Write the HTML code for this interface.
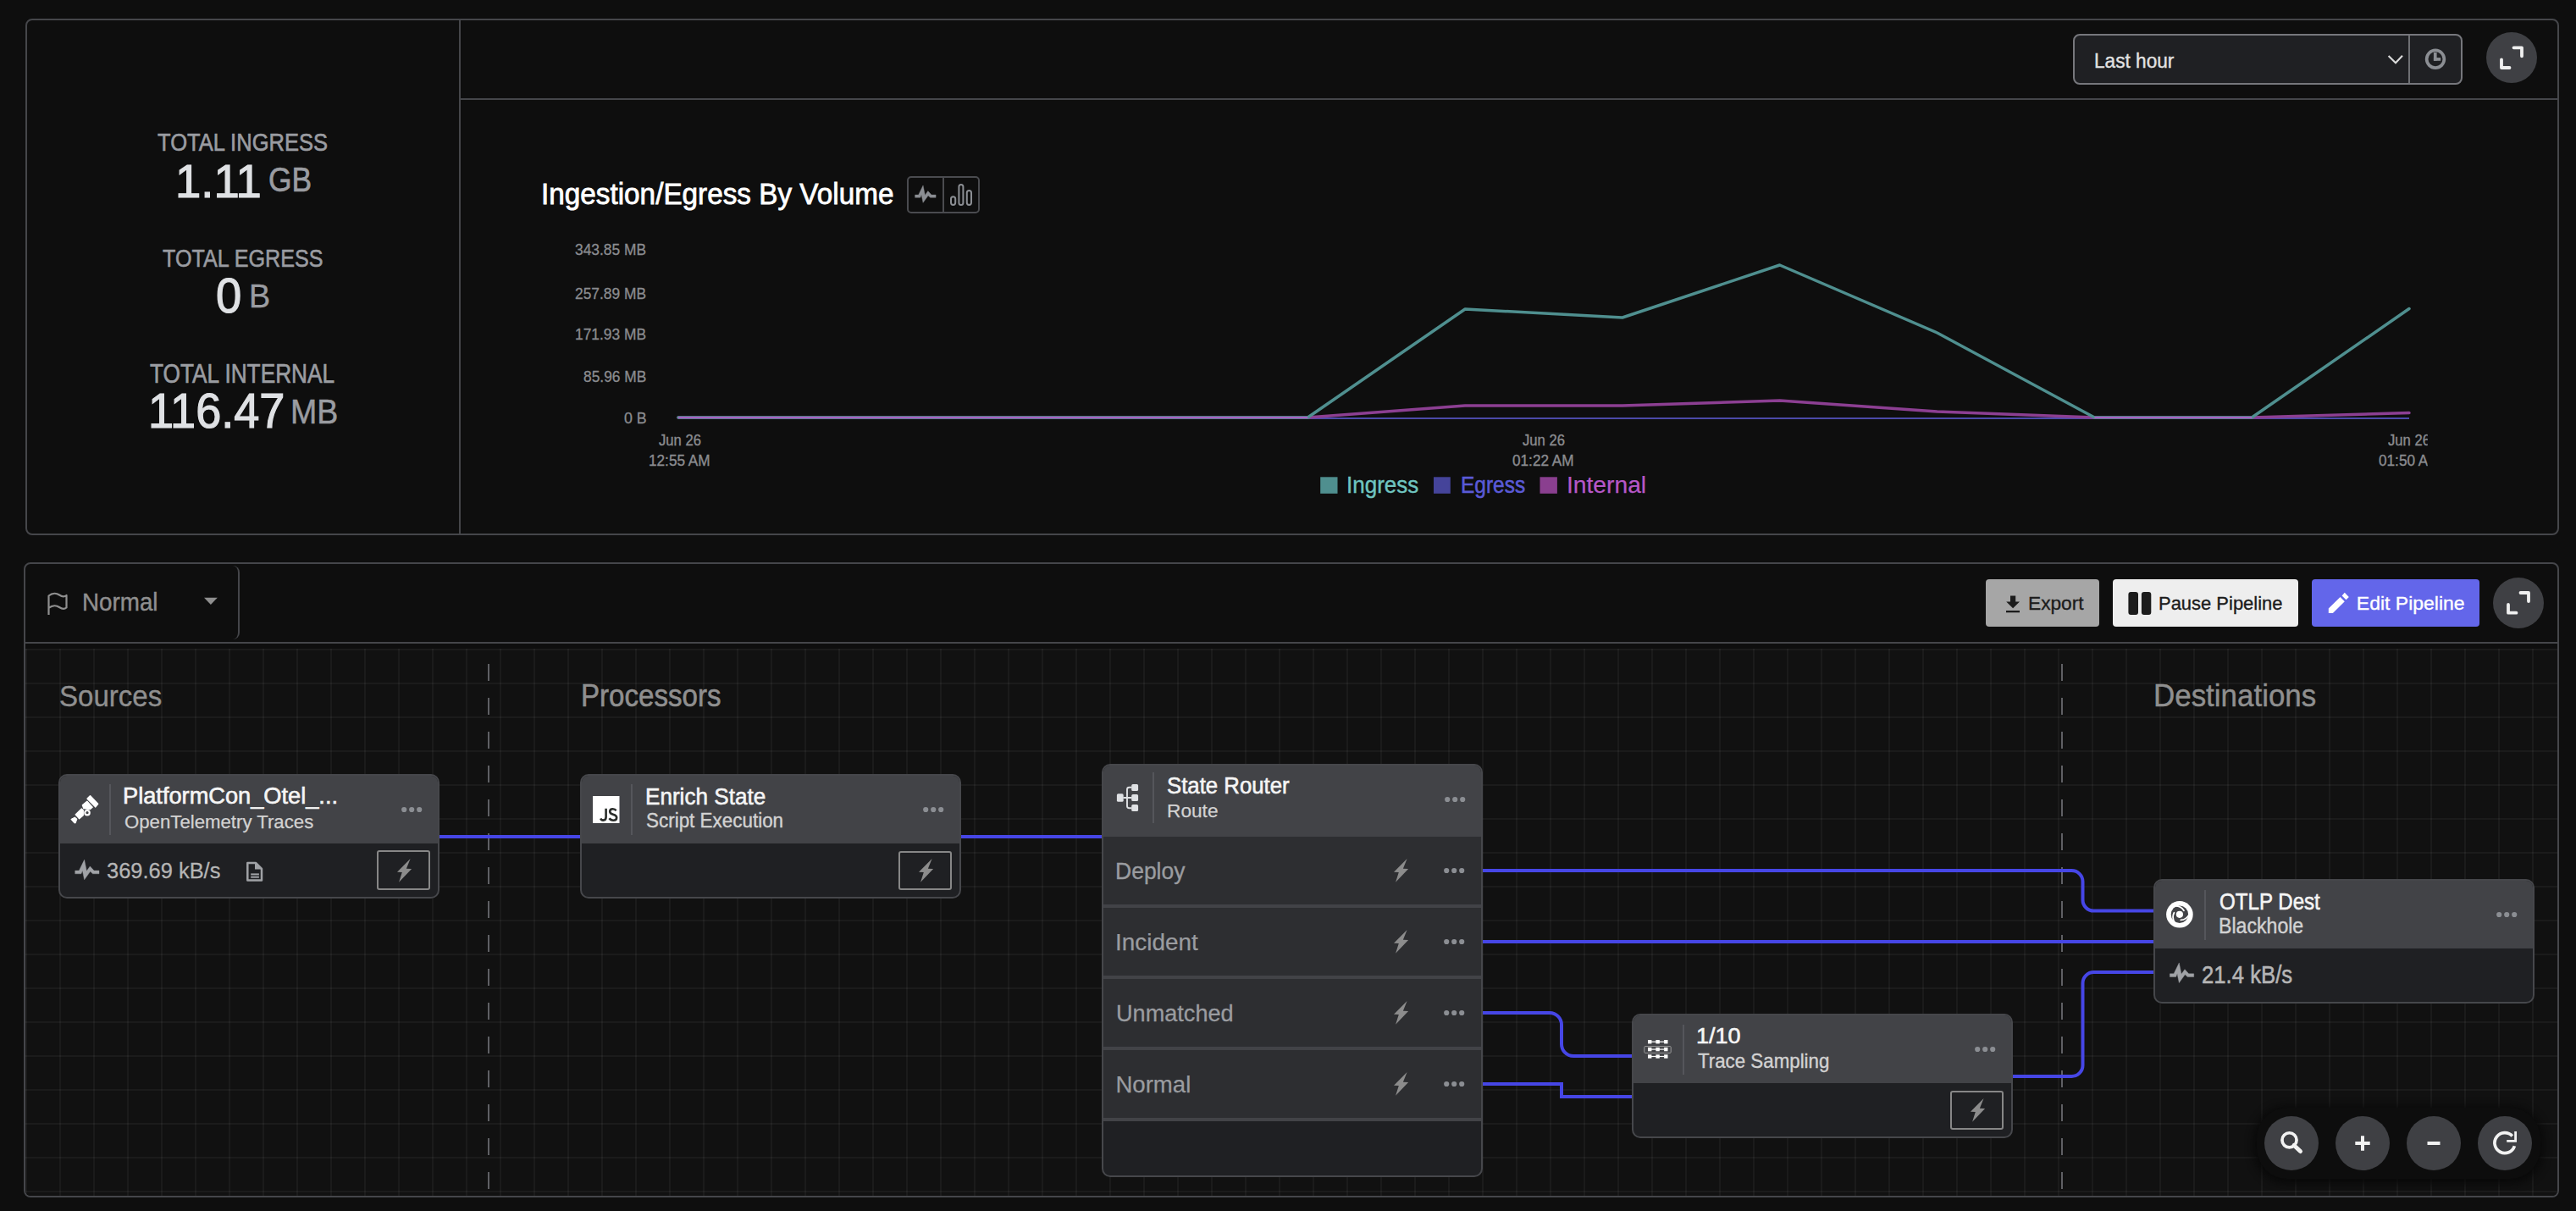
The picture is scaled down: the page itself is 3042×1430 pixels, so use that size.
<!DOCTYPE html><html><head><meta charset="utf-8"><style>
*{margin:0;padding:0;box-sizing:border-box}
html,body{width:3042px;height:1430px;overflow:hidden;background:#0e0e0e;font-family:"Liberation Sans",sans-serif}
.a{position:absolute}
.t{position:absolute;white-space:nowrap;transform-origin:0 0}
.panel{position:absolute;border:2px solid #45464a;border-radius:8px;background:#0e0e0e}
.card{position:absolute;border:2px solid #46474b;border-radius:10px;background:#1f2023;overflow:hidden}
.card .hd{position:absolute;left:0;top:0;right:0;background:#424347}
.card .dv{position:absolute;width:2px;background:#55565b}
.bolt{position:absolute;border:2px solid #8a8a8a;border-radius:2px;width:63px;height:47px}
</style></head><body>
<div class="panel" style="left:30px;top:22px;width:2992px;height:610px"></div>
<div class="a" style="left:542px;top:23px;width:2px;height:608px;background:#45464a"></div>
<div class="a" style="left:544px;top:116px;width:2477px;height:2px;background:#45464a"></div>
<div class="a" style="left:2448px;top:40px;width:460px;height:60px;border:2px solid #76777c;border-radius:8px;background:#1f2023"></div>
<div class="a" style="left:2844px;top:42px;width:2px;height:56px;background:#6e7074"></div>
<svg class="a" style="left:0;top:0" width="3042" height="140" viewBox="0 0 3042 140"><polyline points="2820.6,66 2829,74.2 2837,65.8" fill="none" stroke="#dcdcdc" stroke-width="2.1"/><circle cx="2876" cy="69.8" r="10.35" fill="none" stroke="#8b8e93" stroke-width="3.7"/><rect x="2873.9" y="62" width="3.7" height="9.8" fill="#8b8e93"/><rect x="2873.9" y="68.1" width="8.3" height="3.7" fill="#8b8e93"/><circle cx="2966" cy="68" r="30" fill="#3f4044"/><polyline points="2968.5,56.3 2978,56.3 2978,66.3" fill="none" stroke="#f0f0f0" stroke-width="3.8" stroke-linecap="round" stroke-linejoin="round"/><polyline points="2954,70.3 2954,80 2963.5,80" fill="none" stroke="#f0f0f0" stroke-width="3.8" stroke-linecap="round" stroke-linejoin="round"/></svg>
<div class="a" style="left:1071px;top:208px;width:86px;height:44px;border:2px solid #4a4b4f;border-radius:5px"></div>
<div class="a" style="left:1113px;top:209px;width:2px;height:42px;background:#4a4b4f"></div>
<svg class="a" style="left:1060px;top:200px" width="110" height="60" viewBox="1060 200 110 60"><rect x="1123" y="232.2" width="5.2" height="9.7" rx="2.6" fill="none" stroke="#8b8e93" stroke-width="2"/><rect x="1132.4" y="218.1" width="5" height="23.8" rx="2.5" fill="none" stroke="#8b8e93" stroke-width="2"/><rect x="1141.8" y="225" width="5.2" height="16.9" rx="2.6" fill="none" stroke="#8b8e93" stroke-width="2"/></svg>
<svg class="a" style="left:0;top:0" width="3042" height="600" viewBox="0 0 3042 600"><polyline points="801.0,494.0 986.8,494.0 1172.6,494.0 1358.5,494.0 1544.3,494.0 1730.1,494.0 1915.9,494.0 2101.7,494.0 2287.6,494.0 2473.4,494.0 2659.2,494.0 2845.0,494.0" fill="none" stroke="#4b4aa8" stroke-width="2"/><polyline points="801.0,493.0 986.8,493.0 1172.6,493.0 1358.5,493.0 1544.3,493.0 1730.1,479.0 1915.9,479.0 2101.7,473.0 2287.6,486.0 2473.4,493.0 2659.2,493.0 2845.0,487.5" fill="none" stroke="#8c3f92" stroke-width="3.5" stroke-linejoin="round" stroke-linecap="round"/><polyline points="801.0,493.0 986.8,493.0 1172.6,493.0 1358.5,493.0 1544.3,493.0 1730.1,365.0 1915.9,375.0 2101.7,313.0 2287.6,393.0 2473.4,493.0 2659.2,493.0 2845.0,364.5" fill="none" stroke="#4f8f8f" stroke-width="3.5" stroke-linejoin="round" stroke-linecap="round"/><line x1="801" y1="493.2" x2="1544.3" y2="493.2" stroke="#b45ac8" stroke-width="1.8"/><line x1="2473.4" y1="493.2" x2="2659.2" y2="493.2" stroke="#b45ac8" stroke-width="1.8"/><rect x="1559.2" y="563.3" width="20.3" height="19.5" fill="#4f8f8f"/><rect x="1693" y="563.3" width="19.8" height="19.5" fill="#45449a"/><rect x="1818.5" y="563.3" width="20.4" height="19.5" fill="#8a3f8f"/></svg>
<div class="panel" style="left:28px;top:664px;width:2994px;height:750px;overflow:hidden"><div class="a" style="left:0;top:92px;width:2990px;height:2px;background:#45464a"></div><div class="a" style="left:0;top:100px;width:2990px;height:646px;background-color:#111111;background-image:linear-gradient(to right,rgba(255,255,255,0.045) 0 2px,transparent 2px),linear-gradient(to bottom,rgba(255,255,255,0.045) 0 2px,transparent 2px);background-size:40px 40px;background-position:0px 0px"></div></div>
<div class="a" style="left:200px;top:668px;width:83px;height:87px;border-right:2px solid #45464a;border-radius:0 8px 8px 0"></div>
<svg class="a" style="left:0;top:650px" width="300" height="100" viewBox="0 650 300 100"><path d="M57.5,726 V703.5 C62,700 67,700.5 70,702.5 C73,704.5 76,705 78.5,703 V717.5 C76,719.5 73,719 70,717 C67,715 62,714.5 57.5,718" fill="none" stroke="#8f8f8f" stroke-width="2.2" stroke-linejoin="round"/><path d="M241,705.7 L256.8,705.7 L248.9,714 Z" fill="#8f8f8f"/></svg>
<div class="a" style="left:2345px;top:684px;width:134px;height:56px;background:#a6a6a6;border-radius:4px"></div>
<div class="a" style="left:2495px;top:684px;width:219px;height:56px;background:#eeeeee;border-radius:4px"></div>
<div class="a" style="left:2730px;top:684px;width:198px;height:56px;background:#6366ea;border-radius:4px"></div>
<svg class="a" style="left:2340px;top:680px" width="700" height="70" viewBox="2340 680 700 70"><path d="M2374,703.6 H2380.2 V710.6 H2385 L2377.1,718.2 L2369.2,710.6 H2374 Z" fill="#1c1c1c"/><rect x="2369" y="721" width="16" height="2.3" fill="#1c1c1c"/><rect x="2513.4" y="699" width="11.6" height="27" rx="3" fill="#1c1c1c"/><rect x="2528.9" y="699" width="11.4" height="27" rx="3" fill="#1c1c1c"/><path d="M2768.8,699.8 L2773.8,704.9 L2770.5,708.2 L2765.6,703.4 Z M2763.6,705 L2768.8,710.2 L2754.9,724 L2749.8,724 L2749.8,718.6 Z" fill="#ffffff"/><circle cx="2974" cy="712" r="30" fill="#3f4044"/><polyline points="2976.5,700.0 2986,700.0 2986,710.0" fill="none" stroke="#f0f0f0" stroke-width="3.8" stroke-linecap="round" stroke-linejoin="round"/><polyline points="2962,714.0 2962,723.7 2971.5,723.7" fill="none" stroke="#f0f0f0" stroke-width="3.8" stroke-linecap="round" stroke-linejoin="round"/></svg>
<svg class="a" style="left:0;top:0" width="3042" height="1430" viewBox="0 0 3042 1430"><line x1="577" y1="784" x2="577" y2="1410" stroke="#5f6064" stroke-width="2" stroke-dasharray="20 20"/><line x1="2435" y1="784" x2="2435" y2="1410" stroke="#5f6064" stroke-width="2" stroke-dasharray="20 20"/></svg>
<svg class="a" style="left:0;top:0" width="3042" height="1430" viewBox="0 0 3042 1430"><g fill="none" stroke="#4646e6" stroke-width="4"><path d="M517,988 H687"/><path d="M1133,988 H1303"/><path d="M1749,1028 H2446.5 A13,13 0 0 1 2459.5,1041 V1062.5 A13,13 0 0 0 2472.5,1075.6 H2545"/><path d="M1749,1112 H2545"/><path d="M1749,1196 H1830 A14,14 0 0 1 1844,1210 V1233 A14,14 0 0 0 1858,1247 H1929"/><path d="M1749,1280 H1844 V1295 H1929"/><path d="M2375,1271 H2446.5 A13,13 0 0 0 2459.5,1258 V1161 A13,13 0 0 1 2472.5,1148 H2545"/></g></svg>
<div class="card" style="left:69px;top:914px;width:450px;height:147px"><div class="hd" style="height:80px"></div></div>
<div class="a" style="left:129.0px;top:926px;width:2px;height:60.0px;background:#55565b"></div>
<svg class="a" style="left:471.9px;top:950px" width="32" height="12" viewBox="471.9 950 32 12" fill="#8b8e93"><circle cx="477.1" cy="956" r="3.1"/><circle cx="486.1" cy="956" r="3.1"/><circle cx="495.1" cy="956" r="3.1"/></svg>
<div class="a" style="left:445.3px;top:1004.4px;width:62.9px;height:47.0px;border:2px solid #878787;border-radius:3px"></div>
<svg class="a" style="left:468.75px;top:1013.9000000000001px" width="18.0" height="28.0" viewBox="0 0 18 28"><path d="M15.6,0 L0,15.8 L5.8,16 L2.1,27.7 L17.1,12 L10.9,11.7 Z" fill="#8c8c8c"/></svg>
<div class="card" style="left:685px;top:914px;width:450px;height:147px"><div class="hd" style="height:80px"></div></div>
<div class="a" style="left:744.7px;top:926px;width:2px;height:60.0px;background:#55565b"></div>
<svg class="a" style="left:1087.5px;top:949.8px" width="32" height="12" viewBox="1087.5 949.8 32 12" fill="#8b8e93"><circle cx="1092.7" cy="955.8" r="3.1"/><circle cx="1101.7" cy="955.8" r="3.1"/><circle cx="1110.7" cy="955.8" r="3.1"/></svg>
<div class="a" style="left:1061.2px;top:1004.5px;width:62.7px;height:46.8px;border:2px solid #878787;border-radius:3px"></div>
<svg class="a" style="left:1084.5500000000002px;top:1013.9000000000001px" width="18.0" height="28.0" viewBox="0 0 18 28"><path d="M15.6,0 L0,15.8 L5.8,16 L2.1,27.7 L17.1,12 L10.9,11.7 Z" fill="#8c8c8c"/></svg>
<div class="card" style="left:1301px;top:902px;width:450px;height:488px"><div class="hd" style="height:84px"></div></div>
<div class="a" style="left:1303px;top:988px;width:446px;height:332px;background:#2d2e31"></div>
<div class="a" style="left:1303px;top:1068px;width:446px;height:4px;background:#424347"></div>
<div class="a" style="left:1303px;top:1152px;width:446px;height:4px;background:#424347"></div>
<div class="a" style="left:1303px;top:1236px;width:446px;height:4px;background:#424347"></div>
<div class="a" style="left:1303px;top:1320px;width:446px;height:4px;background:#424347"></div>
<div class="a" style="left:1361.0px;top:912px;width:2px;height:59.5px;background:#55565b"></div>
<svg class="a" style="left:1703.5px;top:938px" width="32" height="12" viewBox="1703.5 938 32 12" fill="#8b8e93"><circle cx="1708.7" cy="944" r="3.1"/><circle cx="1717.7" cy="944" r="3.1"/><circle cx="1726.7" cy="944" r="3.1"/></svg>
<svg class="a" style="left:1646px;top:1014px" width="18.0" height="28.0" viewBox="0 0 18 28"><path d="M15.6,0 L0,15.8 L5.8,16 L2.1,27.7 L17.1,12 L10.9,11.7 Z" fill="#8c8c8c"/></svg>
<svg class="a" style="left:1703.2px;top:1022px" width="32" height="12" viewBox="1703.2 1022 32 12" fill="#8b8e93"><circle cx="1708.4" cy="1028" r="3.1"/><circle cx="1717.4" cy="1028" r="3.1"/><circle cx="1726.4" cy="1028" r="3.1"/></svg>
<svg class="a" style="left:1646px;top:1098px" width="18.0" height="28.0" viewBox="0 0 18 28"><path d="M15.6,0 L0,15.8 L5.8,16 L2.1,27.7 L17.1,12 L10.9,11.7 Z" fill="#8c8c8c"/></svg>
<svg class="a" style="left:1703.2px;top:1106px" width="32" height="12" viewBox="1703.2 1106 32 12" fill="#8b8e93"><circle cx="1708.4" cy="1112" r="3.1"/><circle cx="1717.4" cy="1112" r="3.1"/><circle cx="1726.4" cy="1112" r="3.1"/></svg>
<svg class="a" style="left:1646px;top:1182px" width="18.0" height="28.0" viewBox="0 0 18 28"><path d="M15.6,0 L0,15.8 L5.8,16 L2.1,27.7 L17.1,12 L10.9,11.7 Z" fill="#8c8c8c"/></svg>
<svg class="a" style="left:1703.2px;top:1190px" width="32" height="12" viewBox="1703.2 1190 32 12" fill="#8b8e93"><circle cx="1708.4" cy="1196" r="3.1"/><circle cx="1717.4" cy="1196" r="3.1"/><circle cx="1726.4" cy="1196" r="3.1"/></svg>
<svg class="a" style="left:1646px;top:1266px" width="18.0" height="28.0" viewBox="0 0 18 28"><path d="M15.6,0 L0,15.8 L5.8,16 L2.1,27.7 L17.1,12 L10.9,11.7 Z" fill="#8c8c8c"/></svg>
<svg class="a" style="left:1703.2px;top:1274px" width="32" height="12" viewBox="1703.2 1274 32 12" fill="#8b8e93"><circle cx="1708.4" cy="1280" r="3.1"/><circle cx="1717.4" cy="1280" r="3.1"/><circle cx="1726.4" cy="1280" r="3.1"/></svg>
<div class="card" style="left:1927px;top:1197px;width:450px;height:147px"><div class="hd" style="height:80px"></div></div>
<div class="a" style="left:1986.6px;top:1209.6px;width:2px;height:59.4px;background:#55565b"></div>
<svg class="a" style="left:2329.6px;top:1232.7px" width="32" height="12" viewBox="2329.6 1232.7 32 12" fill="#8b8e93"><circle cx="2334.8" cy="1238.7" r="3.1"/><circle cx="2343.8" cy="1238.7" r="3.1"/><circle cx="2352.8" cy="1238.7" r="3.1"/></svg>
<div class="a" style="left:2303.3px;top:1287.7px;width:63.0px;height:46.7px;border:2px solid #878787;border-radius:3px"></div>
<svg class="a" style="left:2326.8px;top:1297.0500000000002px" width="18.0" height="28.0" viewBox="0 0 18 28"><path d="M15.6,0 L0,15.8 L5.8,16 L2.1,27.7 L17.1,12 L10.9,11.7 Z" fill="#8c8c8c"/></svg>
<div class="card" style="left:2543px;top:1038px;width:450px;height:147px"><div class="hd" style="height:80px"></div></div>
<div class="a" style="left:2602.5px;top:1050.7px;width:2px;height:58.9px;background:#55565b"></div>
<svg class="a" style="left:2945.6px;top:1073.8px" width="32" height="12" viewBox="2945.6 1073.8 32 12" fill="#8b8e93"><circle cx="2950.8" cy="1079.8" r="3.1"/><circle cx="2959.8" cy="1079.8" r="3.1"/><circle cx="2968.8" cy="1079.8" r="3.1"/></svg>
<div class="a" style="left:2665px;top:1308px;width:335px;height:84px;border-radius:36px;background:#0d0d0d;box-shadow:0 2px 10px 4px rgba(8,8,8,0.85)"></div>
<svg class="a" style="left:2660px;top:1300px" width="360" height="100" viewBox="2660 1300 360 100"><circle cx="2706" cy="1350" r="32" fill="#3f4044"/><circle cx="2790" cy="1350" r="32" fill="#3f4044"/><circle cx="2874" cy="1350" r="32" fill="#3f4044"/><circle cx="2958" cy="1350" r="32" fill="#3f4044"/></svg>
<svg class="a" style="left:0;top:0" width="3042" height="1430" viewBox="0 0 3042 1430"><polygon points="88.70,1028.10 93.40,1028.10 99.60,1015.20 102.30,1028.60 106.30,1022.90 111.00,1028.10 117.00,1028.10 117.00,1031.80 109.50,1031.80 106.60,1029.10 99.60,1038.80 97.40,1028.10 95.90,1031.80 88.70,1031.80" fill="#a0a2a6" stroke="#a0a2a6" stroke-width="0.4" stroke-linejoin="round"/></svg>
<svg class="a" style="left:0;top:0" width="3042" height="1430" viewBox="0 0 3042 1430"><polygon points="2562.40,1149.85 2567.10,1149.85 2573.30,1136.95 2576.00,1150.35 2580.00,1144.65 2584.70,1149.85 2590.70,1149.85 2590.70,1153.55 2583.20,1153.55 2580.30,1150.85 2573.30,1160.55 2571.10,1149.85 2569.60,1153.55 2562.40,1153.55" fill="#a0a2a6" stroke="#a0a2a6" stroke-width="0.4" stroke-linejoin="round"/></svg>
<svg class="a" style="left:0;top:0" width="3042" height="1430" viewBox="0 0 3042 1430"><polygon points="1080.60,230.10 1084.67,230.10 1090.04,218.93 1092.37,230.53 1095.84,225.60 1099.91,230.10 1105.10,230.10 1105.10,233.30 1098.61,233.30 1096.10,230.97 1090.04,239.36 1088.13,230.10 1086.83,233.30 1080.60,233.30" fill="#8b8e93" stroke="#8b8e93" stroke-width="0.4" stroke-linejoin="round"/></svg>
<svg class="a" style="left:0;top:0" width="3042" height="1430" viewBox="0 0 3042 1430"><g fill="#ffffff"><path d="M106.5,939.9 L115.6,949.3 L112.7,952.8 L103.2,943.1 Z" stroke="#ffffff" stroke-width="1.6" stroke-linejoin="round"/><path d="M97.3,950.8 L102.8,946.1 L109.2,953.2 L106.2,955.7 L98.8,954.7 Z" stroke="#ffffff" stroke-width="1.2" stroke-linejoin="round"/><path d="M89.1,961.9 L96.3,955 L98.3,956.7 L98.3,962.7 L93.6,966.9 Z" stroke="#ffffff" stroke-width="1.2" stroke-linejoin="round"/><path d="M83.9,967.4 L88.4,965.1 L90.9,967.1 L89.1,972.1 L87.4,971.6 Z" stroke="#ffffff" stroke-width="1" stroke-linejoin="round"/><circle cx="103" cy="959.7" r="3.8"/></g><circle cx="103" cy="959.7" r="1.6" fill="#424347"/><rect x="700" y="940" width="31.5" height="32" fill="#ffffff"/><path d="M715.6,954.8 V965 Q715.6,968.6 712.2,968.6 Q710.1,968.6 709.2,966.4" fill="none" stroke="#2a2d2a" stroke-width="2.6"/><path d="M727.6,957.3 Q726.3,955.2 723.6,955.2 Q720.2,955.2 720.2,958.2 Q720.2,960.7 724,961.7 Q728.2,962.8 728.2,965.5 Q728.2,968.7 724.2,968.7 Q721,968.7 719.5,966.3" fill="none" stroke="#2a2d2a" stroke-width="2.6"/><g fill="#dfe1e4"><rect x="1318.9" y="937.3" width="7.8" height="9.5" rx="1.6"/><rect x="1336.2" y="926.1" width="7.9" height="7.9" rx="1.6"/><rect x="1336.2" y="938.1" width="7.9" height="7.9" rx="1.6"/><rect x="1336.2" y="950.1" width="7.9" height="7.9" rx="1.6"/></g><path d="M1336.5,929.8 H1333.5 Q1331,929.8 1331,932.3 V951.7 Q1331,954.2 1333.5,954.2 H1336.5 M1326.5,942 H1336.5" fill="none" stroke="#dfe1e4" stroke-width="1.9"/><g fill="#ffffff"><rect x="1946" y="1228" width="4.4" height="4.4"/><rect x="1955.4" y="1228" width="4.4" height="4.4"/><rect x="1965.1" y="1228" width="4.4" height="4.4"/><rect x="1950" y="1229.6" width="15.4" height="1.2"/><rect x="1946" y="1236.9" width="4.4" height="4.4"/><rect x="1955.4" y="1236.9" width="4.4" height="4.4"/><rect x="1965.1" y="1236.9" width="4.4" height="4.4"/><rect x="1950" y="1238.5" width="15.4" height="1.2"/><rect x="1946" y="1245.3" width="4.4" height="4.4"/><rect x="1955.4" y="1245.3" width="4.4" height="4.4"/><rect x="1965.1" y="1245.3" width="4.4" height="4.4"/><rect x="1950" y="1246.8999999999999" width="15.4" height="1.2"/></g><rect x="1941.8" y="1235.6" width="31.4" height="7.8" rx="1" fill="none" stroke="#9a9a9a" stroke-width="1"/><circle cx="2573.9" cy="1079.8" r="15.8" fill="#ffffff"/><circle cx="2573.9" cy="1079.8" r="10.2" fill="#424347"/><circle cx="2573.9" cy="1079.8" r="4.1" fill="#ffffff"/><g fill="none" stroke="#ffffff" stroke-width="1.8" stroke-linecap="round"><path d="M2568.64,1069.91 Q2575.67,1069.75 2578.95,1075.25"/><path d="M2585.09,1080.19 Q2581.71,1086.36 2575.31,1086.45"/><path d="M2567.96,1089.30 Q2564.32,1083.29 2567.43,1077.70"/></g><path d="M302,1019 H292.3 V1039.5 H309 V1026 Z" fill="none" stroke="#a0a2a6" stroke-width="2.5" stroke-linejoin="round"/><path d="M301,1018.5 L310,1026.5 L301,1026.5 Z" fill="#a0a2a6"/><rect x="296.2" y="1031.4" width="9.7" height="2" fill="#a0a2a6"/><rect x="296.2" y="1034.7" width="9.7" height="2" fill="#a0a2a6"/><g fill="none" stroke="#f2f2f2"><circle cx="2703.5" cy="1346.3" r="8.55" stroke-width="3.7"/><line x1="2709" y1="1352.5" x2="2716.5" y2="1359.5" stroke-width="5" stroke-linecap="round"/><path d="M2781.3,1350 H2798.7 M2790,1341.3 V1358.7" stroke-width="4"/><path d="M2866.5,1350 H2881.5" stroke-width="4"/><path d="M2969.4,1353.2 A12,12 0 1 1 2966.8,1341.5" stroke-width="3.7"/><path d="M2970.6,1336 V1347.3 H2960.2" stroke-width="2.8"/></g></svg>
<div class="t" style="left:185.99px;top:153.40px;font-size:30.23px;line-height:30.23px;color:#9a9ca1;transform:scaleX(0.8451);-webkit-text-stroke:0.67px #9a9ca1;">TOTAL INGRESS</div>
<div class="t" style="left:206.62px;top:185.54px;font-size:55.81px;line-height:55.81px;color:#dfe1e4;transform:scaleX(0.9752);-webkit-text-stroke:1.20px #dfe1e4;">1.11</div>
<div class="t" style="left:316.73px;top:193.03px;font-size:40.12px;line-height:40.12px;color:#9a9ca1;transform:scaleX(0.8817);-webkit-text-stroke:0.68px #9a9ca1;">GB</div>
<div class="t" style="left:191.80px;top:291.39px;font-size:29.07px;line-height:29.07px;color:#9a9ca1;transform:scaleX(0.8652);-webkit-text-stroke:0.60px #9a9ca1;">TOTAL EGRESS</div>
<div class="t" style="left:255.49px;top:321.42px;font-size:57.85px;line-height:57.85px;color:#dfe1e4;transform:scaleX(0.9409);-webkit-text-stroke:1.20px #dfe1e4;">0</div>
<div class="t" style="left:293.58px;top:330.62px;font-size:38.95px;line-height:38.95px;color:#9a9ca1;transform:scaleX(0.9693);-webkit-text-stroke:0.36px #9a9ca1;">B</div>
<div class="t" style="left:177.38px;top:425.83px;font-size:30.67px;line-height:30.67px;color:#9a9ca1;transform:scaleX(0.8554);-webkit-text-stroke:0.65px #9a9ca1;">TOTAL INTERNAL</div>
<div class="t" style="left:174.84px;top:457.88px;font-size:56.83px;line-height:56.83px;color:#dfe1e4;transform:scaleX(0.9519);-webkit-text-stroke:1.20px #dfe1e4;">116.47</div>
<div class="t" style="left:342.99px;top:465.54px;font-size:40.70px;line-height:40.70px;color:#9a9ca1;transform:scaleX(0.9232);-webkit-text-stroke:0.53px #9a9ca1;">MB</div>
<div class="t" style="left:2473.19px;top:59.69px;font-size:23.98px;line-height:23.98px;color:#e2e2e2;transform:scaleX(0.9441);-webkit-text-stroke:0.37px #e2e2e2;">Last hour</div>
<div class="t" style="left:638.70px;top:212.17px;font-size:35.47px;line-height:35.47px;color:#ffffff;transform:scaleX(0.9387);-webkit-text-stroke:0.80px #ffffff;">Ingestion/Egress By Volume</div>
<div class="t" style="left:679.39px;top:285.84px;font-size:18.02px;line-height:18.02px;color:#8a8b8f;transform:scaleX(0.9649);-webkit-text-stroke:0.31px #8a8b8f;">343.85 MB</div>
<div class="t" style="left:679.39px;top:337.84px;font-size:18.02px;line-height:18.02px;color:#8a8b8f;transform:scaleX(0.9649);-webkit-text-stroke:0.31px #8a8b8f;">257.89 MB</div>
<div class="t" style="left:679.39px;top:385.74px;font-size:18.02px;line-height:18.02px;color:#8a8b8f;transform:scaleX(0.9649);-webkit-text-stroke:0.31px #8a8b8f;">171.93 MB</div>
<div class="t" style="left:689.06px;top:435.54px;font-size:18.02px;line-height:18.02px;color:#8a8b8f;transform:scaleX(0.9649);-webkit-text-stroke:0.31px #8a8b8f;">85.96 MB</div>
<div class="t" style="left:736.79px;top:485.47px;font-size:18.46px;line-height:18.46px;color:#8a8b8f;transform:scaleX(0.9649);-webkit-text-stroke:0.31px #8a8b8f;">0 B</div>
<div class="t" style="left:778.13px;top:511.42px;font-size:18.17px;line-height:18.17px;color:#8a8b8f;transform:scaleX(0.9162);-webkit-text-stroke:0.39px #8a8b8f;">Jun 26</div>
<div class="t" style="left:766.16px;top:534.82px;font-size:18.75px;line-height:18.75px;color:#8a8b8f;transform:scaleX(0.9162);-webkit-text-stroke:0.39px #8a8b8f;">12:55 AM</div>
<div class="t" style="left:1798.13px;top:511.42px;font-size:18.17px;line-height:18.17px;color:#8a8b8f;transform:scaleX(0.9162);-webkit-text-stroke:0.39px #8a8b8f;">Jun 26</div>
<div class="t" style="left:1786.31px;top:534.82px;font-size:18.75px;line-height:18.75px;color:#8a8b8f;transform:scaleX(0.9162);-webkit-text-stroke:0.39px #8a8b8f;">01:22 AM</div>
<div class="t" style="left:2820.23px;top:511.42px;font-size:18.17px;line-height:18.17px;color:#8a8b8f;transform:scaleX(0.9162);-webkit-text-stroke:0.39px #8a8b8f;width:50.5px;overflow:hidden;">Jun 26</div>
<div class="t" style="left:2808.61px;top:534.82px;font-size:18.75px;line-height:18.75px;color:#8a8b8f;transform:scaleX(0.9162);-webkit-text-stroke:0.39px #8a8b8f;width:63.2px;overflow:hidden;">01:50 AM</div>
<div class="t" style="left:1590.16px;top:559.17px;font-size:27.91px;line-height:27.91px;color:#6fc5c0;transform:scaleX(0.9315);-webkit-text-stroke:0.42px #6fc5c0;">Ingress</div>
<div class="t" style="left:1724.74px;top:559.17px;font-size:27.91px;line-height:27.91px;color:#5a5ad6;transform:scaleX(0.8763);-webkit-text-stroke:0.56px #5a5ad6;">Egress</div>
<div class="t" style="left:1849.66px;top:559.17px;font-size:27.91px;line-height:27.91px;color:#b657c8;transform:scaleX(1.0108);-webkit-text-stroke:0.25px #b657c8;">Internal</div>
<div class="t" style="left:96.78px;top:696.29px;font-size:29.65px;line-height:29.65px;color:#8f8f8f;transform:scaleX(0.9371);-webkit-text-stroke:0.42px #8f8f8f;">Normal</div>
<div class="t" style="left:2395.18px;top:700.86px;font-size:22.97px;line-height:22.97px;color:#1c1c1c;transform:scaleX(0.9880);-webkit-text-stroke:0.35px #1c1c1c;">Export</div>
<div class="t" style="left:2549.24px;top:700.86px;font-size:22.97px;line-height:22.97px;color:#1c1c1c;transform:scaleX(0.9559);-webkit-text-stroke:0.35px #1c1c1c;">Pause Pipeline</div>
<div class="t" style="left:2782.86px;top:700.86px;font-size:22.97px;line-height:22.97px;color:#ffffff;-webkit-text-stroke:0.35px #ffffff;">Edit Pipeline</div>
<div class="t" style="left:70.21px;top:804.71px;font-size:34.59px;line-height:34.59px;color:#8f8f8f;transform:scaleX(0.9562);-webkit-text-stroke:0.39px #8f8f8f;">Sources</div>
<div class="t" style="left:685.75px;top:803.42px;font-size:37.06px;line-height:37.06px;color:#8f8f8f;transform:scaleX(0.8934);-webkit-text-stroke:0.61px #8f8f8f;">Processors</div>
<div class="t" style="left:2543.20px;top:803.12px;font-size:37.06px;line-height:37.06px;color:#8f8f8f;transform:scaleX(0.9429);-webkit-text-stroke:0.44px #8f8f8f;">Destinations</div>
<div class="t" style="left:145.42px;top:926.93px;font-size:26.89px;line-height:26.89px;color:#f5f5f5;transform:scaleX(1.0123);-webkit-text-stroke:0.60px #f5f5f5;">PlatformCon_Otel_...</div>
<div class="t" style="left:146.60px;top:960.03px;font-size:21.22px;line-height:21.22px;color:#d2d2d2;transform:scaleX(1.0459);-webkit-text-stroke:0.25px #d2d2d2;">OpenTelemetry Traces</div>
<div class="t" style="left:126.31px;top:1016.09px;font-size:25.87px;line-height:25.87px;color:#b5b5b5;transform:scaleX(0.9842);-webkit-text-stroke:0.29px #b5b5b5;">369.69 kB/s</div>
<div class="t" style="left:761.51px;top:926.89px;font-size:27.76px;line-height:27.76px;color:#f5f5f5;transform:scaleX(0.9407);-webkit-text-stroke:0.60px #f5f5f5;">Enrich State</div>
<div class="t" style="left:762.59px;top:957.32px;font-size:24.42px;line-height:24.42px;color:#d2d2d2;transform:scaleX(0.9192);-webkit-text-stroke:0.43px #d2d2d2;">Script Execution</div>
<div class="t" style="left:1378.24px;top:914.83px;font-size:26.89px;line-height:26.89px;color:#f5f5f5;transform:scaleX(0.9585);-webkit-text-stroke:0.60px #f5f5f5;">State Router</div>
<div class="t" style="left:1377.58px;top:946.62px;font-size:22.53px;line-height:22.53px;color:#d2d2d2;transform:scaleX(1.0072);-webkit-text-stroke:0.25px #d2d2d2;">Route</div>
<div class="t" style="left:1317.48px;top:1014.92px;font-size:27.62px;line-height:27.62px;color:#9a9ca0;transform:scaleX(0.9599);-webkit-text-stroke:0.35px #9a9ca0;">Deploy</div>
<div class="t" style="left:1317.09px;top:1098.92px;font-size:27.62px;line-height:27.62px;color:#9a9ca0;transform:scaleX(1.0110);-webkit-text-stroke:0.25px #9a9ca0;">Incident</div>
<div class="t" style="left:1317.57px;top:1182.92px;font-size:27.62px;line-height:27.62px;color:#9a9ca0;transform:scaleX(0.9821);-webkit-text-stroke:0.29px #9a9ca0;">Unmatched</div>
<div class="t" style="left:1317.38px;top:1266.92px;font-size:27.62px;line-height:27.62px;color:#9a9ca0;-webkit-text-stroke:0.25px #9a9ca0;">Normal</div>
<div class="t" style="left:2003.47px;top:1210.40px;font-size:26.45px;line-height:26.45px;color:#f5f5f5;transform:scaleX(1.0217);-webkit-text-stroke:0.60px #f5f5f5;">1/10</div>
<div class="t" style="left:2005.05px;top:1241.42px;font-size:23.84px;line-height:23.84px;color:#d2d2d2;transform:scaleX(0.9359);-webkit-text-stroke:0.39px #d2d2d2;">Trace Sampling</div>
<div class="t" style="left:2620.51px;top:1050.55px;font-size:28.05px;line-height:28.05px;color:#f5f5f5;transform:scaleX(0.8595);-webkit-text-stroke:0.60px #f5f5f5;">OTLP Dest</div>
<div class="t" style="left:2619.75px;top:1080.56px;font-size:24.86px;line-height:24.86px;color:#d2d2d2;transform:scaleX(0.9298);-webkit-text-stroke:0.41px #d2d2d2;">Blackhole</div>
<div class="t" style="left:2599.71px;top:1136.89px;font-size:29.07px;line-height:29.07px;color:#b5b5b5;transform:scaleX(0.8844);-webkit-text-stroke:0.55px #b5b5b5;">21.4 kB/s</div>
</body></html>
